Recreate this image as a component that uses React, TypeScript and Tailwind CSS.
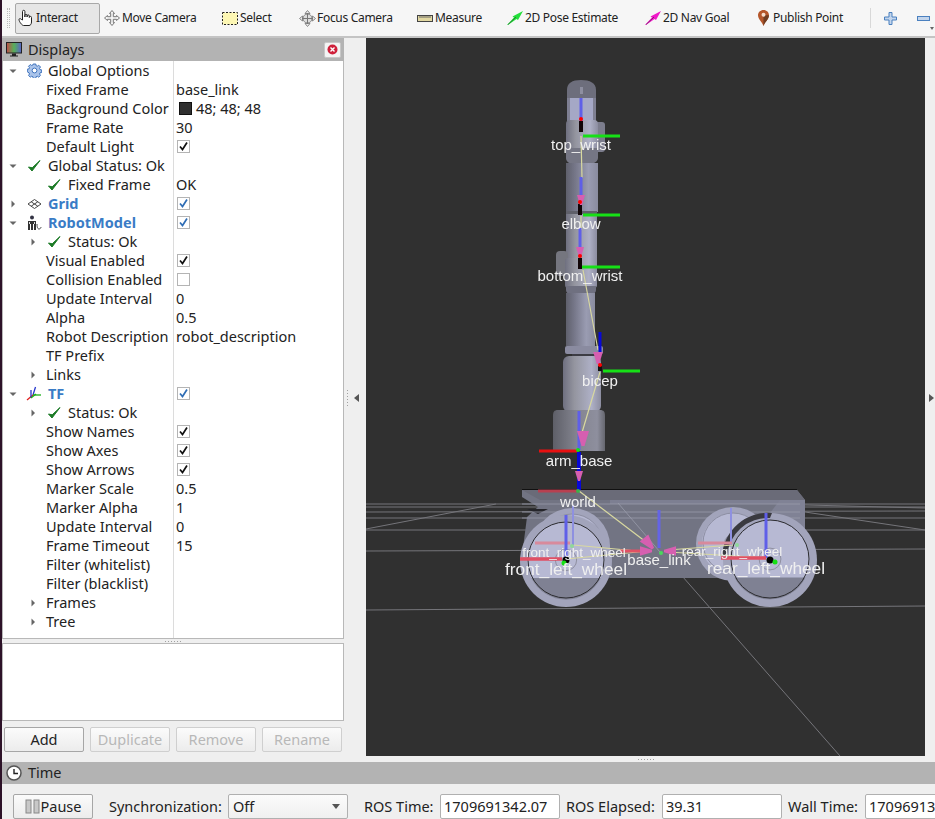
import React from "react";

const FONT = "font-['Noto_Sans','Open_Sans',sans-serif]";

function Tri({ dir }: { dir: "down" | "right" }) {
  return (
    <svg width="8" height="8" viewBox="0 0 8 8" className="shrink-0">
      {dir === "down" ? <path d="M0.5 2.5H7.5L4 6Z" fill="#666" /> : <path d="M2.5 0.5V7.5L6 4Z" fill="#666" />}
    </svg>
  );
}

const Gear = () => (
  <svg width="15" height="15" viewBox="0 0 15 15">
    <path d="M6.2 1h2.6l.3 1.7 1.2.5 1.4-1 1.8 1.8-1 1.4.5 1.2 1.7.3v2.6l-1.7.3-.5 1.2 1 1.4-1.8 1.8-1.4-1-1.2.5-.3 1.7H6.2l-.3-1.7-1.2-.5-1.4 1-1.8-1.8 1-1.4-.5-1.2L.3 8.8V6.2L2 5.9l.5-1.2-1-1.4L3.3 1.500l1.4 1 1.2-.5z" fill="#a9c3ea" stroke="#3f73bd" strokeWidth="1" />
    <circle cx="7.500" cy="7.500" r="2.400" fill="#fff" stroke="#3f73bd" />
  </svg>
);
const Tick = () => (
  <svg width="14" height="14" viewBox="0 0 14 14">
    <path d="M1.500 8 L5 12 L13 1.500 L5.200 8.800 Z" fill="#1b7a25" stroke="#1b7a25" strokeWidth="1" strokeLinejoin="round" />
  </svg>
);
const GridIcon = () => (
  <svg width="15" height="10" viewBox="0 0 15 10" fill="none" stroke="#444" strokeWidth="1">
    <path d="M7.500 .5 14 5 7.500 9.500 1 5Z M4.200 2.800 10.800 7.200 M10.800 2.800 4.200 7.200" />
  </svg>
);
const RobotIcon = () => (
  <svg width="16" height="16" viewBox="0 0 16 16">
    <circle cx="6" cy="2.500" r="2" fill="#334" />
    <path d="M2 6h8v9H8V9H7v6H5V9H4v6H2Z" fill="#333" />
    <path d="M3 7h1v2H3Z M8 7h1v2H8Z" fill="#ddd" />
    <path d="M11 9c0 4 1 5 2 5s2-1 2-2" fill="none" stroke="#444" />
  </svg>
);
const TfIcon = () => (
  <svg width="16" height="16" viewBox="0 0 16 16" fill="none" strokeWidth="1.300">
    <path d="M7 9 9.500 1" stroke="#2233cc" />
    <path d="M7 9H15" stroke="#18b018" />
    <path d="M7 9 1 14" stroke="#e02020" />
    <path d="M5 4v8" stroke="#2233cc" />
    <path d="M5 12 10 8" stroke="#18b018" />
  </svg>
);

function Check({ on, blue }: { on?: boolean; blue?: boolean }) {
  return (
    <div className="w-[13px] h-[13px] ml-[1px] border border-[#b4b4b4] bg-white flex items-center justify-center">
      {on && (
        <svg width="11" height="11" viewBox="0 0 11 11">
          <path d="M2 5.500 4.500 8.500 9 1.500" fill="none" stroke={blue ? "#2f6db5" : "#111"} strokeWidth="1.700" />
        </svg>
      )}
    </div>
  );
}

type RowT = {
  label: string;
  l0?: boolean;
  arrow?: "down" | "right";
  icon?: React.ReactNode;
  blue?: boolean;
  value?: React.ReactNode;
};

function Row({ label, l0, arrow, icon, blue, value }: RowT) {
  let lead: React.ReactNode;
  if (l0) {
    lead = (
      <>
        <span className="w-[6px]" />
        <span className="w-[8px] flex">{arrow && <Tri dir={arrow} />}</span>
        <span className="w-[9px]" />
        <span className="w-[16px] flex justify-center items-center">{icon}</span>
        <span className="w-[6px]" />
      </>
    );
  } else {
    lead = (
      <>
        <span className="w-[26px]" />
        <span className="w-[8px] flex">{arrow && <Tri dir={arrow} />}</span>
        {icon ? (
          <>
            <span className="w-[10px]" />
            <span className="w-[14px] flex">{icon}</span>
            <span className="w-[7px]" />
          </>
        ) : (
          <span className="w-[9px]" />
        )}
      </>
    );
  }
  return (
    <div className="flex h-[19px] items-center">
      <div className="w-[170px] flex items-center shrink-0 whitespace-nowrap overflow-hidden">
        {lead}
        <span className={blue ? "font-bold text-[#3a7cc6]" : ""}>{label}</span>
      </div>
      <div className="w-px h-[19px] bg-[#dcdcdc]" />
      <div className="pl-[2px] flex items-center">{value}</div>
    </div>
  );
}

const Val = ({ t }: { t: string }) => <span>{t}</span>;

const rows: RowT[] = [
  { label: "Global Options", l0: true, arrow: "down", icon: <Gear /> },
  { label: "Fixed Frame", value: <Val t="base_link" /> },
  {
    label: "Background Color",
    value: (
      <span className="flex items-center">
        <span className="w-[13px] h-[13px] bg-[#303030] border border-[#111] ml-[3px] mr-[4px]" />
        48; 48; 48
      </span>
    ),
  },
  { label: "Frame Rate", value: <Val t="30" /> },
  { label: "Default Light", value: <Check on /> },
  { label: "Global Status: Ok", l0: true, arrow: "down", icon: <Tick /> },
  { label: "Fixed Frame", icon: <Tick />, value: <Val t="OK" /> },
  { label: "Grid", l0: true, arrow: "right", icon: <GridIcon />, blue: true, value: <Check on blue /> },
  { label: "RobotModel", l0: true, arrow: "down", icon: <RobotIcon />, blue: true, value: <Check on blue /> },
  { label: "Status: Ok", arrow: "right", icon: <Tick /> },
  { label: "Visual Enabled", value: <Check on /> },
  { label: "Collision Enabled", value: <Check /> },
  { label: "Update Interval", value: <Val t="0" /> },
  { label: "Alpha", value: <Val t="0.5" /> },
  { label: "Robot Description", value: <Val t="robot_description" /> },
  { label: "TF Prefix" },
  { label: "Links", arrow: "right" },
  { label: "TF", l0: true, arrow: "down", icon: <TfIcon />, blue: true, value: <Check on blue /> },
  { label: "Status: Ok", arrow: "right", icon: <Tick /> },
  { label: "Show Names", value: <Check on /> },
  { label: "Show Axes", value: <Check on /> },
  { label: "Show Arrows", value: <Check on /> },
  { label: "Marker Scale", value: <Val t="0.5" /> },
  { label: "Marker Alpha", value: <Val t="1" /> },
  { label: "Update Interval", value: <Val t="0" /> },
  { label: "Frame Timeout", value: <Val t="15" /> },
  { label: "Filter (whitelist)" },
  { label: "Filter (blacklist)" },
  { label: "Frames", arrow: "right" },
  { label: "Tree", arrow: "right" },
];

const HandIcon = () => (
  <svg width="17" height="18" viewBox="0 0 17 18" fill="#fff" stroke="#222" strokeWidth="1">
    <path d="M4.500 11V2.500a1.200 1.200 0 0 1 2.400 0V8V6.500a1.100 1.100 0 0 1 2.200 0V8 7a1.100 1.100 0 0 1 2.200 0v1.500a1.100 1.100 0 0 1 2.200 0V13c0 2-1 3.500-2.500 3.500H5.500C4 16.500 1 12.500 1 10.500c0-1 1.500-1.200 2.200-.2Z" />
  </svg>
);
const MoveIcon = () => (
  <svg width="16" height="16" viewBox="0 0 16 16" fill="#f4f4f4" stroke="#777" strokeWidth="1">
    <path d="M8 .5 10.500 3.500H9.300V6.700H12.500V5.500L15.500 8 12.500 10.500V9.300H9.300V12.500H10.500L8 15.500 5.500 12.500H6.700V9.300H3.500V10.500L.5 8 3.500 5.500V6.700H6.700V3.500H5.500Z" />
  </svg>
);
const SelectIcon = () => (
  <svg width="16" height="13" viewBox="0 0 16 13">
    <rect x=".5" y=".5" width="15" height="12" fill="#fdf7b4" stroke="#222" strokeDasharray="2 1.500" />
  </svg>
);
const FocusIcon = () => (
  <svg width="17" height="17" viewBox="0 0 17 17" fill="none" stroke="#888" strokeWidth="1">
    <path d="M8.500 .5 11 3.500H6Z M8.500 16.500 11 13.500H6Z M.5 8.500 3.500 6V11Z M16.500 8.500 13.500 6V11Z" fill="#eee" />
    <circle cx="8.500" cy="8.500" r="4.500" fill="#ddd" />
    <path d="M8.500 3v11M3 8.500h11" stroke="#777" />
  </svg>
);
const RulerIcon = () => (
  <svg width="16" height="7" viewBox="0 0 16 7">
    <rect x=".5" y=".5" width="15" height="6" fill="#e2d8a2" stroke="#444" />
    <path d="M3 1v2M5 1v2M7 1v2M9 1v2M11 1v2M13 1v2" stroke="#666" />
  </svg>
);
const PoseIcon = ({ c }: { c: string }) => (
  <svg width="16" height="14" viewBox="0 0 16 14">
    <path d="M0 14 7 6.500 5.500 5.500 16 0 11 9 9.500 8 1 14Z" fill={c} />
    <path d="M1 13.500 9 6" stroke="#222" strokeWidth=".5" />
  </svg>
);
const PinIcon = () => (
  <svg width="11" height="16" viewBox="0 0 11 16">
    <path d="M5.500 0C2.300 0 0 2.300 0 5.300 0 9 4 12 5.500 16 7 12 11 9 11 5.300 11 2.300 8.700 0 5.500 0Z" fill="#b5562a" />
    <path d="M5.500 16C7 12 11 9 11 5.300H5.500Z" fill="#6f3d22" />
    <circle cx="5.500" cy="4.800" r="2" fill="#f5dccb" />
  </svg>
);
const PlusIcon = () => (
  <svg width="13" height="13" viewBox="0 0 13 13">
    <path d="M5 .5H8V5H12.500V8H8V12.500H5V8H.5V5H5Z" fill="#c3d5ec" stroke="#4a80bf" />
  </svg>
);
const MinusIcon = () => (
  <svg width="13" height="5" viewBox="0 0 13 5">
    <rect x=".5" y=".5" width="12" height="4" fill="#c3d5ec" stroke="#4a80bf" />
  </svg>
);

function Tool({ icon, label, cls, w }: { icon: React.ReactNode; label: string; cls: string; w: string }) {
  return (
    <div className={`flex items-center whitespace-nowrap shrink-0 ${cls}`}>
      <span className="w-[18px] flex justify-center items-center mr-[1px]">{icon}</span>
      <span className={w}>{label}</span>
    </div>
  );
}

function Toolbar() {
  return (
    <div className="h-[38px] shrink-0 flex items-center bg-[#f6f6f6] border-b-2 border-[#c4c4c4] text-[12px] tracking-[-0.3px] text-[#222]">
      <div className="ml-[5px] w-[3px] h-[20px] shrink-0 border-l border-r border-dotted border-[#bbb]" />
      <div className="ml-[5px] w-[85px] h-[31px] shrink-0 flex items-center rounded-[2px] border border-[#a8a8a8] bg-[#e6e6e6] pl-[2px]">
        <HandIcon />
        <span className="ml-[1px]">Interact</span>
      </div>
      <Tool icon={<MoveIcon />} label="Move Camera" cls="ml-[3px]" w="w-[74px]" />
      <Tool icon={<SelectIcon />} label="Select" cls="ml-[25px]" w="w-[33px]" />
      <Tool icon={<FocusIcon />} label="Focus Camera" cls="ml-[25px]" w="w-[75px]" />
      <Tool icon={<RulerIcon />} label="Measure" cls="ml-[24px]" w="w-[47px]" />
      <Tool icon={<PoseIcon c="#22e03a" />} label="2D Pose Estimate" cls="ml-[24px]" w="w-[95px]" />
      <Tool icon={<PoseIcon c="#f018c8" />} label="2D Nav Goal" cls="ml-[24px]" w="w-[66px]" />
      <Tool icon={<PinIcon />} label="Publish Point" cls="ml-[25px]" w="w-[71px]" />
      <div className="ml-[26px] w-px h-[20px] shrink-0 bg-[#d8d8d8]" />
      <div className="ml-[13px] w-[13px] flex shrink-0"><PlusIcon /></div>
      <div className="ml-[20px] w-[13px] flex shrink-0"><MinusIcon /></div>
      <svg width="4" height="3" viewBox="0 0 4 3" className="shrink-0 mt-[20px]"><path d="M0 0H4L2 3Z" fill="#666" /></svg>
    </div>
  );
}

function Btn({ t, off }: { t: string; off?: boolean }) {
  return (
    <div
      className={`w-[80px] h-[25px] rounded-[2px] flex items-center justify-center bg-gradient-to-b from-[#fbfbfb] to-[#ececec] border ${
        off ? "border-[#cfcfcf] text-[#b8b8b8]" : "border-[#a6a6a6] text-[#222]"
      }`}
    >
      {t}
    </div>
  );
}

function Dots({ vertical }: { vertical?: boolean }) {
  const n = [0, 1, 2, 3, 4, 5];
  return (
    <div className={`flex ${vertical ? "flex-col gap-[2px]" : "gap-[2px]"}`}>
      {n.map((i) => (
        <span key={i} className="w-px h-px bg-[#a0a0a0]" />
      ))}
    </div>
  );
}

function Displays() {
  return (
    <div className="w-[342px] shrink-0 flex flex-col text-[14.500px] text-[#222]">
      <div className="h-[23px] shrink-0 bg-[#b3b3b3] flex items-center pl-[4px] pr-[3px]">
        <svg width="16" height="15" viewBox="0 0 16 15">
          <defs>
            <linearGradient id="scr" x1="0" x2="1" y1="0" y2="0">
              <stop offset="0" stopColor="#c14a4a" />
              <stop offset=".5" stopColor="#56b05a" />
              <stop offset="1" stopColor="#5a62c8" />
            </linearGradient>
          </defs>
          <rect x=".5" y=".5" width="15" height="10.500" fill="url(#scr)" stroke="#222" />
          <path d="M6 11.500h4v2H12v1H4v-1h2Z" fill="#222" />
        </svg>
        <span className="ml-[6px] flex-1">Displays</span>
        <div className="w-[17px] h-[16px] rounded-[2px] bg-[#f4f4f4] border border-[#c8c8c8] flex items-center justify-center">
          <svg width="11" height="11" viewBox="0 0 11 11">
            <circle cx="5.500" cy="5.500" r="5" fill="#cf1f3a" />
            <path d="M3.500 3.500 7.500 7.500M7.500 3.500 3.500 7.500" stroke="#fff" strokeWidth="1.400" />
          </svg>
        </div>
      </div>
      <div className="h-[578px] shrink-0 bg-white border border-t-0 border-[#b8b8b8] overflow-hidden">
        {rows.map((r, i) => (
          <Row key={i} {...r} />
        ))}
        <div className="flex h-[8px]">
          <div className="w-[170px]" />
          <div className="w-px bg-[#dcdcdc]" />
        </div>
      </div>
      <div className="h-[4px] shrink-0 flex items-center justify-center"><Dots /></div>
      <div className="h-[78px] shrink-0 bg-white border border-[#b8b8b8]" />
      <div className="h-[25px] shrink-0 mt-[6px] ml-[2px] flex gap-[6px]">
        <Btn t="Add" />
        <Btn t="Duplicate" off />
        <Btn t="Remove" off />
        <Btn t="Rename" off />
      </div>
    </div>
  );
}

const L = "#75757a";

function Cone({ x, y, rot = 0, s = 1 }: { x: number; y: number; rot?: number; s?: number }) {
  return (
    <path
      d="M-4 0H4L1 10H-1Z"
      transform={`translate(${x} ${y}) rotate(${rot}) scale(${s})`}
      fill="#d65fb0"
    />
  );
}

function Wheel({ cx, cy, r, ir, chord }: { cx: number; cy: number; r: number; ir: number; chord?: boolean }) {
  const dy = r * 0.37;
  const ri = r * 0.84;
  const hw = Math.sqrt(ri * ri - dy * dy);
  return (
    <g>
      <circle cx={cx} cy={cy} r={r} fill="#a2a4bb" />
      <circle cx={cx} cy={cy} r={ri} fill="#b7b9d3" />
      {chord && <path d={`M${cx - hw} ${cy + dy} A${ri} ${ri} 0 0 0 ${cx + hw} ${cy + dy} Z`} fill="#7f8193" />}
      <circle cx={cx} cy={cy - 1} r={ir} fill="none" stroke={chord ? "#2c2c30" : "#8c8ea2"} strokeWidth="1" />
      <circle cx={cx} cy={cy - 1} r={ir * 0.28} fill="none" stroke="#7c7c8a" strokeWidth=".7" />
    </g>
  );
}

function Label({ x, y, s, t, clip }: { x: number; y: number; s: number; t: string; clip?: string }) {
  return (
    <text
      x={x}
      y={y}
      fontSize={s}
      textAnchor="middle"
      fontFamily="'Liberation Sans', sans-serif"
      fill="#f0f0f0"
      clipPath={clip}
    >
      {t}
    </text>
  );
}

function Scene() {
  return (
    <div className="w-[559px] h-[718px] shrink-0 bg-[#303030] overflow-hidden">
      <svg width="559" height="718" viewBox="366 38 559 718" className="block blur-[0.4px]">
        <defs>
          <linearGradient id="tube" x1="0" x2="1" y1="0" y2="0">
            <stop offset="0" stopColor="#5f606c" />
            <stop offset=".3" stopColor="#77788a" />
            <stop offset=".7" stopColor="#9a9cb2" />
            <stop offset="1" stopColor="#8a8c9f" />
          </linearGradient>
          <linearGradient id="tube2" x1="0" x2="1" y1="0" y2="0">
            <stop offset="0" stopColor="#6f7080" />
            <stop offset=".3" stopColor="#94959f" />
            <stop offset=".75" stopColor="#aeb0c6" />
            <stop offset="1" stopColor="#8c8da0" />
          </linearGradient>
          <linearGradient id="base" x1="0" x2="1" y1="0" y2="0">
            <stop offset="0" stopColor="#5e5f68" />
            <stop offset=".45" stopColor="#83848f" />
            <stop offset=".85" stopColor="#8e8f9e" />
            <stop offset="1" stopColor="#66676f" />
          </linearGradient>
          <clipPath id="frw"><rect x="500" y="540" width="128" height="24" /></clipPath>
        </defs>

        {/* grid */}
        <g stroke={L} strokeWidth="1" fill="none">
          <path d="M366 504H925M366 507H925M366 512 925 511M366 518H925M366 530H925M366 551 925 549M366 610 925 606" />
          <path d="M366 529 496 504M805 512 925 530M727 503 925 508" />
          <path d="M618 503 840 756" />
        </g>

        {/* arm */}
        <path d="M567 98V90C567 83 572 80 581 80S596 83 596 90V98Z" fill="#6d6e7c" />
        <rect x="567" y="98" width="29" height="24" fill="#a5a8c6" />
        <rect x="567" y="98" width="3" height="24" fill="#7e7f92" />
        <rect x="593" y="98" width="3" height="24" fill="#7e7f92" />
        <rect x="580" y="87" width="3" height="7" fill="#8e8fa0" />
        <rect x="595" y="122" width="10" height="30" rx="3" fill="#7c7d8d" />
        <rect x="566" y="120" width="32" height="34" rx="4" fill="url(#tube2)" />
        <path d="M566 148H598V158C598 163 590 165 581 165S566 163 566 158Z" fill="#757684" />
        <rect x="566" y="163" width="32" height="49" fill="url(#tube)" />
        <rect x="566" y="211" width="31" height="3" fill="#5f606a" />
        <rect x="566" y="214" width="31" height="48" fill="url(#tube2)" />
        <rect x="556" y="251" width="12" height="25" rx="4" fill="#75767f" />
        <rect x="565" y="258" width="32" height="30" rx="3" fill="url(#tube2)" />
        <path d="M566 286H596V290C596 294 590 296 581 296S566 294 566 290Z" fill="#6f7080" />
        <rect x="566" y="293" width="29" height="53" fill="url(#tube)" />
        <rect x="565" y="346" width="38" height="8" rx="2" fill="#8a8ba0" />
        <rect x="572" y="354" width="24" height="2" fill="#3c3c44" />
        <rect x="563" y="356" width="38" height="56" rx="6" fill="url(#tube2)" />
        <path d="M558 410H600C604 410 605 412 605 416V451H553V416C553 412 554 410 558 410Z" fill="url(#base)" />

        {/* chassis behind wheels */}
        <path d="M522 490H797L805 500V542L790 560 740 578H610L523 548 527 517 538 507 522 497Z" fill="#727483" />
        <path d="M522 490H797L805 500H540Z" fill="#6a6b78" />
        <path d="M522 489.500H797" stroke="#111" strokeWidth="1" />
        <path d="M527 509 548 509 538 514Z" fill="#25252a" />
        <rect x="610" y="500" width="190" height="4" fill="#7d7f92" />
        <path d="M730 565 780 500H805V542L790 560Z" fill="#808295" />

        {/* ghost grid over chassis */}
        <g stroke="#9a9cab" strokeWidth="1" fill="none" opacity=".8">
          <path d="M522 504H800M522 512H800M522 518H800M618 503 660 552" />
        </g>

        <Wheel cx={572} cy={546} r={38} ir={31} />
        <Wheel cx={733} cy={544} r={37} ir={30} />
        <Wheel cx={770} cy={560} r={47} ir={39} chord />
        <Wheel cx={566} cy={561} r={46} ir={38} chord />
        <path d="M722 556A46 46 0 0 1 772 513L770 518A41 41 0 0 0 727 556Z" fill="#3a3a40" />

        {/* TF links */}
        <g stroke="#d9d9a0" strokeWidth="1.200" fill="none">
          <path d="M581 136 582 178" />
          <path d="M581 216 581 230" />
          <path d="M583 270 598 350" />
          <path d="M600 372 581 436" />
          <path d="M579 491 650 545" />
          <path d="M566 559 648 551M573 545 648 552M733 545 668 550M770 558 668 552" />
        </g>

        {/* axes */}
        <g fill="none">
          <path d="M581 98V122" stroke="#5f5fe8" strokeWidth="3" />
          <path d="M581 121V132" stroke="#120608" strokeWidth="4" />
          <path d="M583 136H620" stroke="#16e016" strokeWidth="3" />
          <path d="M581 177V197" stroke="#5f5fe8" strokeWidth="3" />
          <path d="M580 204V215" stroke="#120608" strokeWidth="4" />
          <path d="M583 215H620" stroke="#16e016" strokeWidth="3" />
          <path d="M580 228V248" stroke="#5f5fe8" strokeWidth="3" />
          <path d="M580 258V269" stroke="#120608" strokeWidth="4" />
          <path d="M582 267H620" stroke="#16e016" strokeWidth="3" />
          <path d="M600 332V352" stroke="#0808d8" strokeWidth="3" />
          <path d="M600 366V371" stroke="#111" strokeWidth="4" />
          <path d="M603 371H640" stroke="#16e016" strokeWidth="3" />
          <path d="M579 411V450" stroke="#5f5fe8" strokeWidth="3" />
          <path d="M539 451H578" stroke="#e81010" strokeWidth="3" />
          <path d="M579 452V490" stroke="#0808d8" strokeWidth="4" />
          <path d="M538 491H577" stroke="#b84050" strokeWidth="3" />
          <path d="M659 510V548" stroke="#6464e6" strokeWidth="3" />
          <path d="M620 551H650" stroke="#e05064" strokeWidth="3" />
          <path d="M573 505V545" stroke="#8e90e0" strokeWidth="2" />
          <path d="M535 543H570" stroke="#d88a9c" strokeWidth="3" />
          <path d="M731 508V545" stroke="#8e90e0" strokeWidth="2" />
          <path d="M698 543H732" stroke="#d88a9c" strokeWidth="3" />
          <path d="M566 515V558" stroke="#5f5fe8" strokeWidth="3" />
          <path d="M520 559H562" stroke="#e05064" strokeWidth="3.500" />
          <path d="M766 513V558" stroke="#5f5fe8" strokeWidth="3" />
          <path d="M721 558H766" stroke="#e05064" strokeWidth="3.500" />
        </g>
        <Cone x={581} y={195} />
        <Cone x={580} y={247} />
        <Cone x={598} y={352} s={1.200} />
        <Cone x={583} y={431} s={1.500} />
        <Cone x={579} y={471} />
        <Cone x={644} y={538} rot={-40} s={1.400} />
        <Cone x={640} y={551} rot={-90} s={1.200} />
        <Cone x={676} y={551} rot={90} s={1.200} />
        <g>
          <circle cx="581" cy="119" r="2" fill="#f00" />
          <circle cx="580" cy="202" r="2" fill="#f00" />
          <circle cx="580" cy="256" r="2" fill="#f00" />
          <circle cx="600" cy="365" r="2" fill="#f00" />
          <circle cx="578" cy="450" r="2" fill="#16e016" />
          <circle cx="578" cy="491" r="2" fill="#3cb04a" />
          <circle cx="661" cy="553" r="2" fill="#4ad85a" />
          <circle cx="572" cy="546" r="2" fill="#8fd89a" />
          <circle cx="737" cy="545" r="2" fill="#8fd89a" />
          <circle cx="566" cy="560" r="3.500" fill="#050505" />
          <circle cx="564" cy="563" r="2.500" fill="#16e016" />
          <circle cx="770" cy="560" r="3.500" fill="#050505" />
          <circle cx="775" cy="562" r="2.500" fill="#16e016" />
        </g>

        {/* names */}
        <Label x={581} y={150} s={15} t="top_wrist" />
        <Label x={581} y={229} s={15} t="elbow" />
        <Label x={580} y={281} s={15} t="bottom_wrist" />
        <Label x={600} y={386} s={15} t="bicep" />
        <Label x={579} y={466} s={15} t="arm_base" />
        <Label x={578} y={507} s={15} t="world" />
        <Label x={574} y={557} s={13.500} t="front_right_wheel" clip="url(#frw)" />
        <Label x={732} y={556} s={13.500} t="rear_right_wheel" />
        <Label x={566} y={575} s={17.300} t="front_left_wheel" />
        <Label x={659} y={565} s={15} t="base_link" />
        <Label x={766} y={574} s={17.300} t="rear_left_wheel" />
      </svg>
    </div>
  );
}

function Field({ t, w }: { t: string; w: string }) {
  return (
    <div className={`h-[25px] rounded-[2px] border border-[#b0b0b0] bg-white flex items-center pl-[3px] overflow-hidden whitespace-nowrap shrink-0 ${w}`}>
      {t}
    </div>
  );
}

function TimeBar() {
  return (
    <div className="flex flex-col flex-1 text-[14.500px] text-[#222]">
      <div className="h-[22px] shrink-0 bg-[#b3b3b3] flex items-center pl-[4px]">
        <svg width="16" height="16" viewBox="0 0 16 16">
          <circle cx="8" cy="8" r="7" fill="#fff" stroke="#555" strokeWidth="1.500" />
          <path d="M8 4V8.500H12" fill="none" stroke="#222" strokeWidth="1.400" />
        </svg>
        <span className="ml-[6px]">Time</span>
      </div>
      <div className="flex items-start pt-[10px] whitespace-nowrap overflow-hidden">
        <div className="ml-[11px] w-[80px] h-[25px] shrink-0 rounded-[2px] flex items-center justify-center bg-gradient-to-b from-[#fbfbfb] to-[#ececec] border border-[#a6a6a6]">
          <svg width="15" height="15" viewBox="0 0 15 15" className="mr-[1px]">
            <rect x="1" y="1" width="5" height="13" fill="#c8c8c8" stroke="#888" />
            <rect x="9" y="1" width="5" height="13" fill="#c8c8c8" stroke="#888" />
          </svg>
          Pause
        </div>
        <span className="ml-[16px] leading-[25px] w-[119px] shrink-0">Synchronization:</span>
        <div className="w-[120px] h-[25px] shrink-0 rounded-[2px] border border-[#b0b0b0] bg-gradient-to-b from-[#fbfbfb] to-[#f0f0f0] flex items-center pl-[4px] pr-[4px] justify-between">
          Off
          <svg width="8" height="5" viewBox="0 0 8 5" className="mr-[3px]"><path d="M0 0H8L4 5Z" fill="#555" /></svg>
        </div>
        <span className="ml-[16px] leading-[25px] w-[76px] shrink-0">ROS Time:</span>
        <Field t="1709691342.07" w="w-[120px]" />
        <span className="ml-[6px] leading-[25px] w-[96px] shrink-0">ROS Elapsed:</span>
        <Field t="39.31" w="w-[120px]" />
        <span className="ml-[6px] leading-[25px] w-[77px] shrink-0">Wall Time:</span>
        <Field t="1709691342.07" w="w-[120px]" />
      </div>
    </div>
  );
}

export default function App() {
  return (
    <div className={`w-[935px] h-[819px] flex overflow-hidden bg-[#efefef] ${FONT}`}>
      <div className="w-[2px] shrink-0 bg-[#2d1228]" />
      <div className="w-[933px] flex flex-col">
        <Toolbar />
        <div className="h-[724px] shrink-0 flex">
          <Displays />
          <div className="w-[22px] shrink-0 flex items-center pb-[5px] pl-[3px]">
            <Dots vertical />
            <svg width="6" height="8" viewBox="0 0 6 8" className="ml-[6px]"><path d="M5 0V8L0 4Z" fill="#555" /></svg>
          </div>
          <div className="flex flex-col">
            <Scene />
            <div className="h-[6px] flex items-center justify-center"><Dots /></div>
          </div>
          <div className="flex-1 flex items-center justify-end pr-[1px] pb-[5px]">
            <svg width="6" height="8" viewBox="0 0 6 8"><path d="M1 0V8L6 4Z" fill="#555" /></svg>
          </div>
        </div>
        <TimeBar />
      </div>
    </div>
  );
}
